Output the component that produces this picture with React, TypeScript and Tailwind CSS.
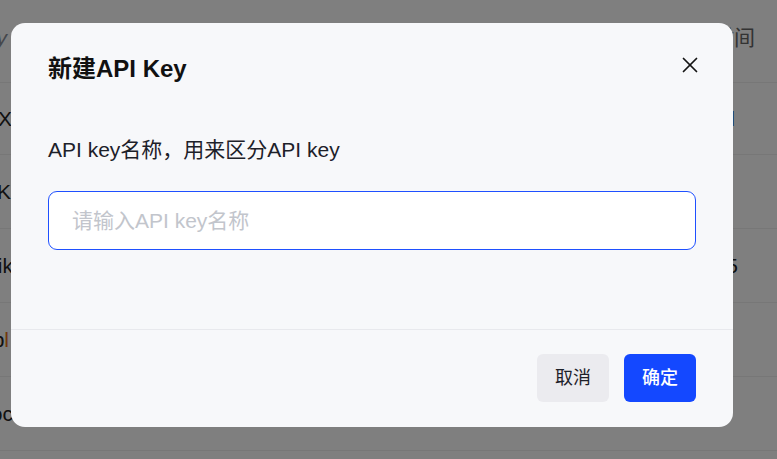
import { X } from "lucide-react";

type Row = {
  left: string;
  leftEnd: string;
  leftAccent?: string;
  right?: string;
  rightClass?: string;
  rightPad?: string;
};

// table rows that sit behind the mask; only their edges peek out
const rows: Row[] = [
  { left: "sk-X", leftEnd: "w-[12px]", right: "查看详情l", rightClass: "text-[#1d4ed8]", rightPad: "pr-[42px]" },
  { left: "demo-K", leftEnd: "w-[11px]" },
  { left: "testik", leftEnd: "w-[13px]", right: "2024-03-05", rightClass: "text-[#222]", rightPad: "pr-[39px]" },
  { left: "mob", leftEnd: "w-[9px]", leftAccent: "l" },
  { left: "doc", leftEnd: "w-[13px]" },
];

function BackgroundTable() {
  return (
    <div className="w-full bg-white text-[21px] text-[#222]">
      <div className="flex h-[83px] items-center border-b border-[#eeeeee] pb-[6px]">
        <div className="flex w-[7px] shrink-0 justify-end whitespace-nowrap italic text-[#8a8f99]">API Key</div>
        <div className="flex-1" />
        <div className="whitespace-nowrap pr-[22px] text-[#666]">创建时间</div>
      </div>
      {rows.map((row, i) => (
        <div
          key={row.left}
          className={`flex items-center border-b border-[#eeeeee] ${i === 0 ? "h-[72px]" : "h-[74px]"}`}
        >
          <div className={`flex shrink-0 justify-end whitespace-nowrap ${row.leftEnd}`}>
            {row.left}
            {row.leftAccent && <span className="text-[#e37318]">{row.leftAccent}</span>}
          </div>
          <div className="flex-1" />
          {row.right && (
            <div className={`whitespace-nowrap ${row.rightPad} ${row.rightClass}`}>{row.right}</div>
          )}
        </div>
      ))}
    </div>
  );
}

function CreateKeyDialog() {
  return (
    <div className="absolute left-[11px] top-[23px] flex h-[404px] w-[722px] flex-col rounded-[14px] bg-[#f7f8fa]">
      <div className="flex items-center justify-between px-[37px] pt-[28px]">
        <h2 className="text-[24px] font-bold leading-[36px] text-[#111111]">新建API Key</h2>
        <button type="button" className="-mr-[7px] -mt-[8px] text-[#141414]" aria-label="关闭">
          <X className="h-[26px] w-[26px]" strokeWidth={1.6} />
        </button>
      </div>

      <div className="flex flex-1 flex-col px-[37px] pt-[48px]">
        <label className="text-[21px] leading-[30px] text-[#1d2129]">API key名称，用来区分API key</label>
        <input
          className="mt-[26px] h-[59px] w-full rounded-[9px] border border-[#1f50ff] bg-white px-[23px] text-[21px] text-[#1d2129] outline-none placeholder:text-[#c2c5cc]"
          placeholder="请输入API key名称"
        />
      </div>

      <div className="flex justify-end gap-[15px] border-t border-[#e8e9ed] px-[37px] pb-[25px] pt-[24px]">
        <button type="button" className="h-[48px] w-[72px] rounded-[6px] bg-[#ebebef] text-[18px] text-[#1d2129]">
          取消
        </button>
        <button type="button" className="h-[48px] w-[72px] rounded-[6px] bg-[#1448ff] text-[18px] font-medium text-white">
          确定
        </button>
      </div>
    </div>
  );
}

export default function App() {
  return (
    <div className="relative h-[459px] w-[777px] overflow-hidden font-['Liberation_Sans','Noto_Sans_CJK_SC',sans-serif]">
      <BackgroundTable />
      <div className="absolute inset-0 bg-black/50" />
      <CreateKeyDialog />
    </div>
  );
}
